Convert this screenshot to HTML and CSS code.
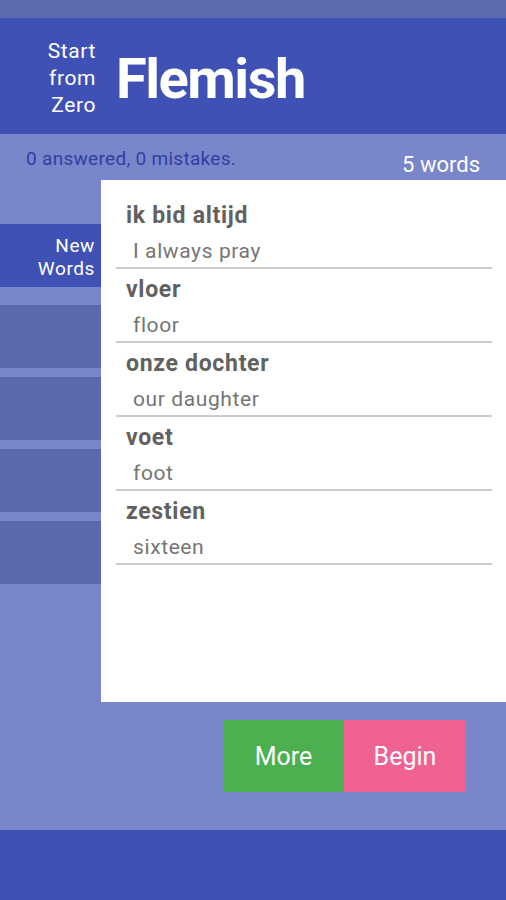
FILE: index.html
```html
<!DOCTYPE html>
<html>
<head>
<meta charset="utf-8">
<link rel="stylesheet" href="styles.css">
</head>
<body>
<div class="statusbar"></div>
<header class="header">
  <div class="brand">Start<br>from<br>Zero</div>
  <h1 class="title">Flemish</h1>
</header>
<main class="main">
  <div class="stats">
    <span class="progress">0 answered, 0 mistakes.</span>
    <span class="count">5 words</span>
  </div>
  <div class="body">
    <nav class="sidebar">
      <div class="tab tab-active">New<br>Words</div>
      <div class="tab"></div>
      <div class="tab"></div>
      <div class="tab"></div>
      <div class="tab"></div>
    </nav>
    <section class="card">
      <div class="item"><div class="word">ik bid altijd</div><div class="trans">I always pray</div></div>
      <div class="item"><div class="word">vloer</div><div class="trans">floor</div></div>
      <div class="item"><div class="word">onze dochter</div><div class="trans">our daughter</div></div>
      <div class="item"><div class="word">voet</div><div class="trans">foot</div></div>
      <div class="item"><div class="word">zestien</div><div class="trans">sixteen</div></div>
    </section>
  </div>
  <div class="actions">
    <button class="btn btn-more">More</button>
    <button class="btn btn-begin">Begin</button>
  </div>
</main>
<footer class="footer"></footer>
</body>
</html>
```
FILE: styles.css
```css
html, body {
  margin: 0;
  padding: 0;
}
body {
  width: 506px;
  height: 900px;
  overflow: hidden;
  font-family: Roboto, "Noto Sans", sans-serif;
  background: #7986cb;
}
.statusbar {
  height: 18px;
  background: #5c6bae;
}
.header {
  height: 116px;
  background: #3f51b5;
  display: flex;
  align-items: flex-start;
  color: #fff;
}
.brand {
  width: 96px;
  margin-top: 20px;
  text-align: right;
  font-size: 21px;
  line-height: 27px;
  letter-spacing: 0.6px;
}
.title {
  margin: 33px 0 0 20px;
  font-size: 56px;
  line-height: 56px;
  font-weight: 700;
  letter-spacing: -1.5px;
}
.main {
  height: 696px;
  background: #7986cb;
  display: flex;
  flex-direction: column;
}
.stats {
  height: 46px;
  display: flex;
  justify-content: space-between;
  align-items: flex-start;
}
.progress {
  margin: 15px 0 0 26px;
  font-size: 19px;
  line-height: 20px;
  letter-spacing: 0.3px;
  color: #303f9f;
}
.count {
  margin: 18px 26px 0 0;
  font-size: 22px;
  line-height: 26px;
  color: #fff;
}
.body {
  display: flex;
  height: 522px;
}
.sidebar {
  width: 101px;
  padding-top: 44px;
  display: flex;
  flex-direction: column;
  gap: 9px;
}
.tab {
  height: 63px;
  background: #5a69ad;
  box-sizing: border-box;
}
.tab-active {
  background: #3f51b5;
  color: #fff;
  text-align: right;
  padding: 10px 6px 0 0;
  font-size: 19px;
  line-height: 23px;
  letter-spacing: 0.6px;
  margin-bottom: 9px;
}
.card {
  flex: 1;
  background: #fff;
  padding: 15px 14px 0 15px;
}
.item {
  padding-top: 5px;
  border-bottom: 2px solid #cdcdcd;
}
.word {
  padding-left: 10px;
  font-size: 23px;
  line-height: 32px;
  font-weight: 700;
  letter-spacing: 0.7px;
  color: #616161;
}
.trans {
  padding: 3px 0 0 17px;
  font-size: 21px;
  line-height: 32px;
  letter-spacing: 0.6px;
  color: #757575;
}
.actions {
  display: flex;
  justify-content: flex-end;
  padding: 18px 40px 0 0;
}
.btn {
  border: 0;
  margin: 0;
  height: 72px;
  width: 121px;
  font-family: Roboto, "Noto Sans", sans-serif;
  font-size: 25px;
  color: #fff;
}
.btn-more {
  background: #4caf50;
}
.btn-begin {
  width: 122px;
  background: #f06292;
}
.footer {
  height: 70px;
  background: #3f51b5;
}
```
